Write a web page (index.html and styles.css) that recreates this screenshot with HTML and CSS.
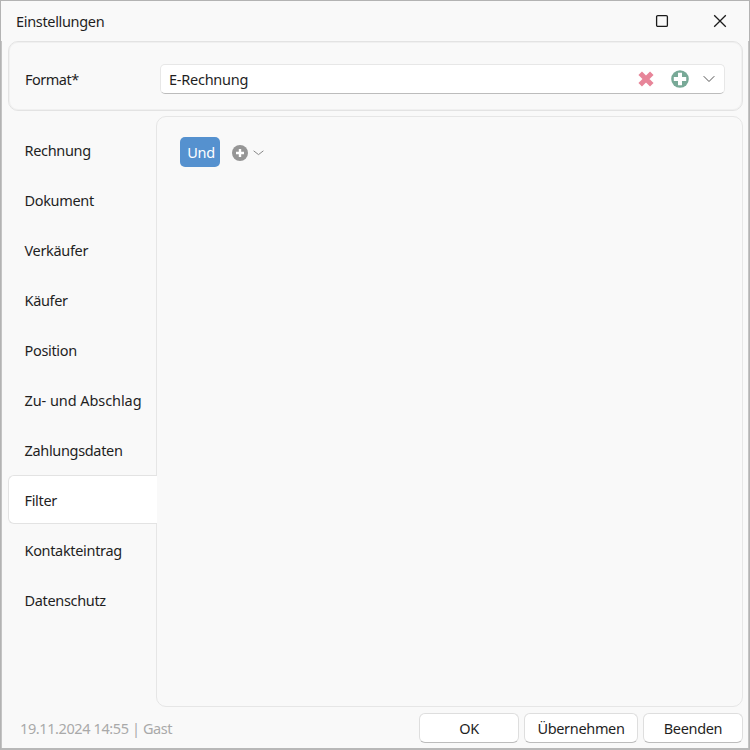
FILE: index.html
```
<!DOCTYPE html>
<html lang="de">
<head>
<meta charset="utf-8">
<title>Einstellungen</title>
<link rel="stylesheet" href="styles.css">
</head>
<body>
<div class="window">
  <header class="titlebar">
    <span class="title">Einstellungen</span>
    <svg class="caption" width="14" height="14" viewBox="0 0 14 14"><rect x="1.6" y="1.6" width="10.8" height="10.8" rx="1.2"/></svg>
    <svg class="caption close" width="14" height="14" viewBox="0 0 14 14"><path d="M1.2 1.2 12.8 12.8M12.8 1.2 1.2 12.8"/></svg>
  </header>
  <div class="content">
    <section class="format">
      <label>Format*</label>
      <div class="combo">
        <span class="value">E-Rechnung</span>
        <svg class="remove" width="16" height="16" viewBox="0 0 16 16"><path d="M2.2 2.2 13.8 13.8M13.8 2.2 2.2 13.8"/></svg>
        <svg class="add" width="18" height="18" viewBox="0 0 18 18"><circle cx="9" cy="9" r="8.8"/><path d="M9 2.8V15.2M2.8 9H15.2"/></svg>
        <svg class="chevron" width="12" height="8" viewBox="0 0 12 8"><path d="M.7 1.2 6 6.5 11.3 1.2"/></svg>
      </div>
    </section>
    <div class="body">
      <nav>
        <a>Rechnung</a><a>Dokument</a><a>Verkäufer</a><a>Käufer</a><a>Position</a><a class="wide">Zu- und Abschlag</a><a>Zahlungsdaten</a><a class="active">Filter</a><a>Kontakteintrag</a><a>Datenschutz</a>
      </nav>
      <main>
        <button class="und">Und</button>
        <svg class="plus" width="16" height="16" viewBox="0 0 16 16"><circle cx="8" cy="8" r="8"/><path d="M8 4V12M4 8H12"/></svg>
        <svg class="chevron small" width="11" height="6" viewBox="0 0 11 6"><path d="M.6 .8 5.5 4.6 10.4 .8"/></svg>
      </main>
    </div>
    <footer>
      <span class="status">19.11.2024 14:55 | Gast</span>
      <button class="ok">OK</button>
      <button class="apply">Übernehmen</button>
      <button class="end">Beenden</button>
    </footer>
  </div>
</div>
</body>
</html>
```
FILE: styles.css
```
* { box-sizing: border-box; }
body {
  margin: 0;
  font: 14.5px/20px "Noto Sans", "Open Sans", sans-serif;
  letter-spacing: -0.33px;
  color: #1f1f1f;
}
button { font: inherit; letter-spacing: inherit; color: inherit; padding: 0; }
svg { flex: none; fill: none; }
.window {
  height: 750px;
  background: #f9f9f9;
  border: 1px solid #b3b3b3;
  border-bottom: 2px solid #b8b8b8;
  display: flex;
  flex-direction: column;
}
.titlebar {
  height: 40px;
  padding: 0 22px 0 15px;
  display: flex;
  align-items: center;
}
.title { flex: 1; }
.caption { stroke: #1b1b1b; stroke-width: 1.3; }
.close { margin-left: 44px; }
.content {
  flex: 1;
  border: solid #c4c4c4;
  border-width: 0 1px;
  padding: 0 5px 0 6px;
  display: flex;
  flex-direction: column;
}
.format {
  height: 70px;
  border: 1px solid #e3e3e3;
  box-shadow: inset 0 0 0 1px #f0f0f0;
  border-radius: 10px;
  padding: 0 17px 0 16px;
  display: flex;
  align-items: center;
}
.format label { width: 135px; padding-top: 6px; letter-spacing: -0.5px; }
.combo {
  flex: 1;
  height: 30px;
  margin-top: 5px;
  background: #fff;
  border: 1px solid #e7e7e7;
  border-bottom-color: #bcbcbc;
  border-radius: 5px;
  padding: 0 9px 0 8px;
  display: flex;
  align-items: center;
}
.value { flex: 1; letter-spacing: -0.25px; }
.remove { stroke: #e78599; stroke-width: 5; }
.add { margin: 0 14.5px 0 16.5px; fill: #78a997; }
.add path { stroke: #fff; stroke-width: 4; }
.chevron { stroke: #555; stroke-width: 1; }
.body { height: 591px; margin-top: 5px; display: flex; }
nav { width: 148px; padding-top: 9px; }
nav a {
  display: flex;
  align-items: center;
  height: 50px;
  padding-left: 16.5px;
  white-space: nowrap;
}
nav a.wide { letter-spacing: -0.07px; }
nav a.active {
  width: 149px;
  height: 49px;
  margin-bottom: 1px;
  padding: 1px 0 0 15.5px;
  position: relative;
  background: #fff;
  border: 1px solid #e3e3e3;
  border-right: 0;
  border-radius: 6px 0 0 6px;
}
main {
  flex: 1;
  border: 1px solid #e6e6e6;
  border-radius: 10px;
  padding: 20px 23px;
  display: flex;
  align-items: flex-start;
}
.und {
  width: 40px;
  height: 30px;
  padding-left: 2px;
  background: #5591cf;
  color: #fff;
  border: 0;
  border-radius: 5px;
}
.plus { margin: 8px 5px 0 12px; fill: #969696; }
.plus path { stroke: #fff; stroke-width: 2.4; }
.small { margin-top: 13px; stroke: #888; }
footer { display: flex; padding: 6px 0 0 12px; }
.status { flex: 1; padding-top: 5px; color: #a9a9a9; letter-spacing: -0.4px; }
footer button {
  height: 30px;
  background: #fff;
  border: 1px solid #dedede;
  border-bottom-color: #bcbcbc;
  border-radius: 6px;
}
.ok { width: 100px; }
.apply { width: 114px; margin: 0 5px; }
.end { width: 100px; }
```
